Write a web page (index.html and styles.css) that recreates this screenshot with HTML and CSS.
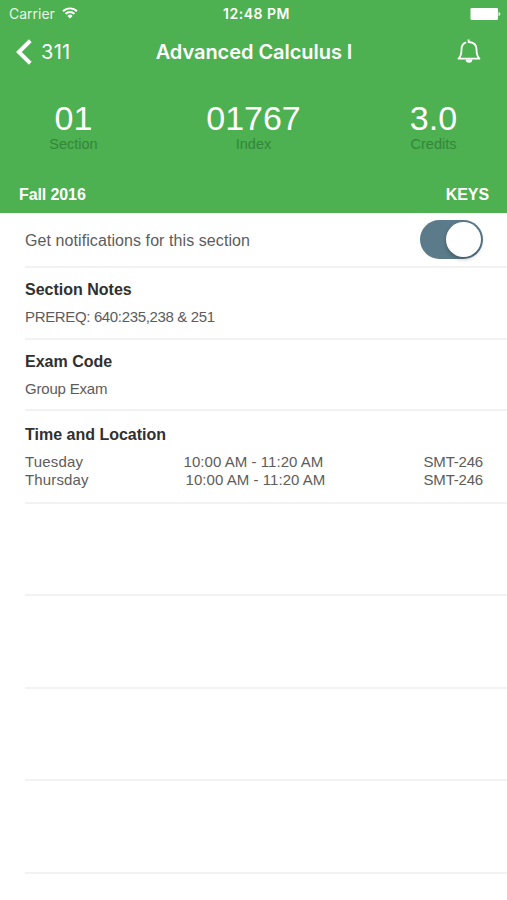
FILE: index.html
```html
<!DOCTYPE html>
<html lang="en">
<head>
<meta charset="utf-8">
<title>Advanced Calculus I</title>
<link rel="stylesheet" href="styles.css">
</head>
<body>
<header class="header">
  <div class="status">
    <div class="carrier"><span>Carrier</span>
      <svg class="wifi" width="16" height="12" viewBox="0 0 16 12" fill="none" stroke="#fff" stroke-width="1.9"><path d="M1 4.2a10 10 0 0 1 14 0M3.5 6.9a6.4 6.4 0 0 1 9 0"/><path d="M8 11.4 5.4 8.9a3.7 3.7 0 0 1 5.2 0z" fill="#fff" stroke="none"/></svg>
    </div>
    <span class="clock">12:48 PM</span>
    <svg class="battery" width="31" height="12" viewBox="0 0 31 12" fill="#fff"><rect x=".5" width="27.5" height="12" rx="1.2"/><path d="M28.6 4q1.8.4 1.8 2t-1.8 2z"/></svg>
  </div>
  <nav class="nav">
    <div class="back">
      <svg width="17" height="26" viewBox="0 0 17 26" fill="none" stroke="#fff" stroke-width="4"><path d="M14.300 1.8 2.800 13l11.500 11.2"/></svg>
      <span class="back-text">311</span>
    </div>
    <h1 class="title">Advanced Calculus I</h1>
    <svg class="bell" width="24" height="26" viewBox="0 0 24 26" fill="none" stroke="#fff" stroke-width="1.8" stroke-linejoin="round"><path d="M11.600.5v2.500c4.900.2 7.900 3 7.900 7.500 0 5 .9 7.200 3 9.200H1.500c2.100-2 3-4.200 3-9.200 0-3.800 1.600-6.200 4.700-7.100"/><path d="M8.700 20.400a3.300 3.300 0 0 0 6.600 0z" fill="#fff" stroke="none"/></svg>
  </nav>
  <div class="stats">
    <div class="stat"><div class="num">01</div><div class="label">Section</div></div>
    <div class="stat"><div class="num">01767</div><div class="label">Index</div></div>
    <div class="stat"><div class="num">3.0</div><div class="label">Credits</div></div>
  </div>
  <div class="term"><span>Fall 2016</span><span>KEYS</span></div>
</header>
<main class="list">
  <section class="row notify"><span class="notify-text">Get notifications for this section</span><span class="switch"><span class="knob"></span></span></section>
  <section class="row detail"><h2>Section Notes</h2><p class="prereq">PREREQ: 640:235,238 &amp; 251</p></section>
  <section class="row detail"><h2>Exam Code</h2><p>Group Exam</p></section>
  <section class="row times"><h2>Time and Location</h2>
    <div class="meeting"><span class="day">Tuesday</span><span class="time">10:00 AM - 11:20 AM</span><span class="room">SMT-246</span></div>
    <div class="meeting thursday"><span class="day">Thursday</span><span class="time">10:00 AM - 11:20 AM</span><span class="room">SMT-246</span></div>
  </section>
  <div class="row empty"></div>
  <div class="row empty"></div>
  <div class="row empty"></div>
  <div class="row empty"></div>
</main>
</body>
</html>
```
FILE: styles.css
```css
* { box-sizing: border-box; }
body { margin: 0; height: 900px; overflow: hidden; background: #fff; color: #5c5c5c; font: 15px/18px "Liberation Sans", Arial, sans-serif; }
svg { display: block; flex: none; }
h1, h2, p { margin: 0; white-space: nowrap; }
.header { height: 213px; background: #4db051; color: #fff; }
.status { display: grid; grid-template-columns: 1fr auto 1fr; height: 28px; align-items: center; padding: 0 6px 0 9px; font: 14px/18px Inter, sans-serif; }
.carrier { display: flex; align-items: center; gap: 7px; color: #e7f6e6; }
.wifi { margin-top: -2px; }
.clock { font-weight: 600; letter-spacing: .5px; transform: translateX(1.5px); }
.battery { justify-self: end; }
.nav { display: grid; grid-template-columns: 1fr auto 1fr; height: 48px; align-items: center; padding: 0 26px 0 16px; }
.back { display: flex; align-items: center; gap: 8px; font: 20px/24px Inter, sans-serif; letter-spacing: .3px; }
.title { font: 600 20px/24px Inter, sans-serif; letter-spacing: -.05px; transform: translateX(5.5px); }
.bell { justify-self: end; }
.stats { display: grid; grid-template-columns: 147px 1fr 147px; height: 97px; padding-top: 24px; text-align: center; }
.num { font-size: 34px; line-height: 36px; height: 36px; }
.label { font-size: 14.5px; line-height: 16px; color: #34863a; }
.term { display: flex; justify-content: space-between; padding: 13px 18px 0 19px; font-weight: bold; font-size: 16px; line-height: 18px; letter-spacing: -.1px; }
.list { padding-left: 25px; }
.row { border-bottom: 2px solid #f2f2f2; }
h2 { font-size: 16px; line-height: 20px; color: #303030; }
.notify { height: 55px; display: flex; justify-content: space-between; padding: 7px 24px 0 0; }
.notify-text { font-size: 16px; line-height: 41px; letter-spacing: .08px; }
.switch { width: 63px; height: 39px; border-radius: 20px; background: #5b7b8b; padding: 2px; display: flex; justify-content: flex-end; }
.knob { width: 35px; height: 35px; border-radius: 50%; background: #fff; box-shadow: 0 2px 4px #0004; }
.detail { height: 71.5px; padding-top: 12px; }
.detail p { margin-top: 8px; line-height: 18px; letter-spacing: -.2px; }
.detail .prereq { letter-spacing: -.35px; }
.times { height: 92.5px; padding-top: 14px; }
.meeting { display: grid; grid-template-columns: 158.5px 1fr auto; padding-right: 24px; line-height: 18px; }
.day { letter-spacing: .15px; }
.time { letter-spacing: .05px; }
.room { letter-spacing: -.2px; }
h2 + .meeting { margin-top: 8px; }
.thursday .time { padding-left: 2px; }
.empty { height: 92.5px; }
```
